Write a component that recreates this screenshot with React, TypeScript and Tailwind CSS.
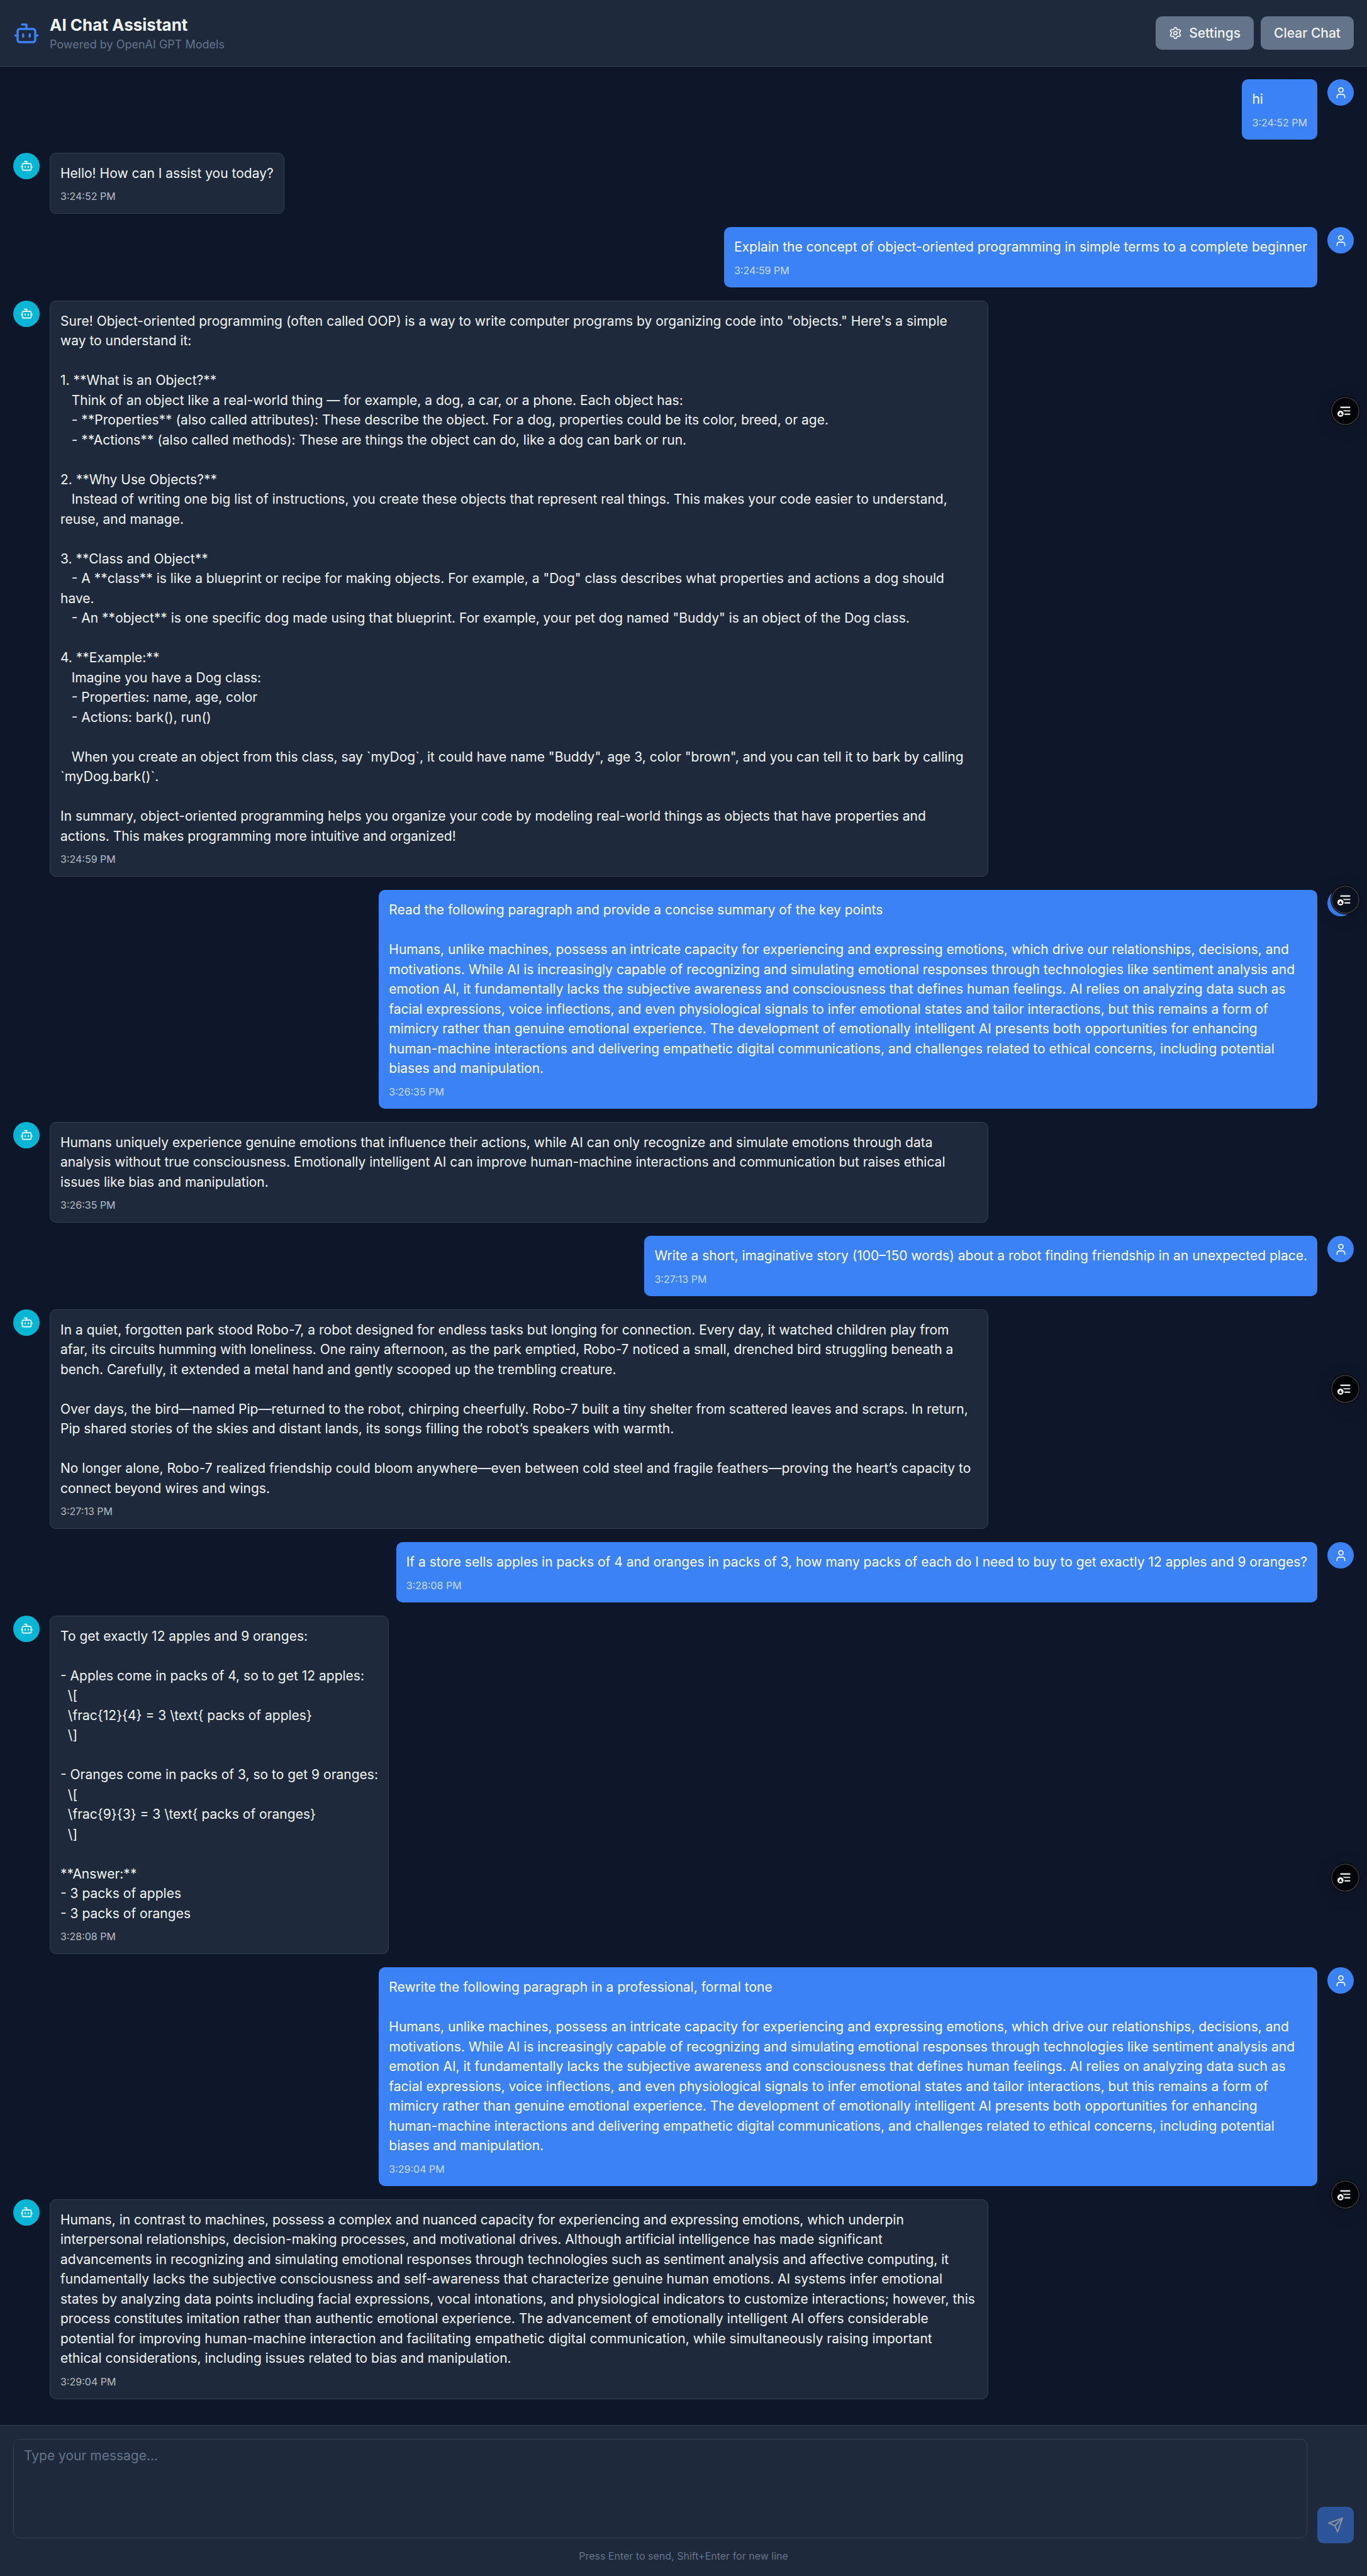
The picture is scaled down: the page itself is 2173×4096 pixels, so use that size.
import { useState } from "react";
import { Bot, Settings, User } from "lucide-react";

type Message = { role: "user" | "bot"; time: string; text: string };

const paragraph =
  "Humans, unlike machines, possess an intricate capacity for experiencing and expressing emotions, which drive our relationships, decisions, and motivations. While AI is increasingly capable of recognizing and simulating emotional responses through technologies like sentiment analysis and emotion AI, it fundamentally lacks the subjective awareness and consciousness that defines human feelings. AI relies on analyzing data such as facial expressions, voice inflections, and even physiological signals to infer emotional states and tailor interactions, but this remains a form of mimicry rather than genuine emotional experience. The development of emotionally intelligent AI presents both opportunities for enhancing human-machine interactions and delivering empathetic digital communications, and challenges related to ethical concerns, including potential biases and manipulation.";

const messages: Message[] = [
  { role: "user", time: "3:24:52 PM", text: "hi" },
  { role: "bot", time: "3:24:52 PM", text: "Hello! How can I assist you today?" },
  {
    role: "user",
    time: "3:24:59 PM",
    text: "Explain the concept of object-oriented programming in simple terms to a complete beginner",
  },
  {
    role: "bot",
    time: "3:24:59 PM",
    text: `Sure! Object-oriented programming (often called OOP) is a way to write computer programs by organizing code into "objects." Here's a simple
way to understand it:

1. **What is an Object?**
   Think of an object like a real-world thing — for example, a dog, a car, or a phone. Each object has:
   - **Properties** (also called attributes): These describe the object. For a dog, properties could be its color, breed, or age.
   - **Actions** (also called methods): These are things the object can do, like a dog can bark or run.

2. **Why Use Objects?**
   Instead of writing one big list of instructions, you create these objects that represent real things. This makes your code easier to understand, reuse, and manage.

3. **Class and Object**
   - A **class** is like a blueprint or recipe for making objects. For example, a "Dog" class describes what properties and actions a dog should have.
   - An **object** is one specific dog made using that blueprint. For example, your pet dog named "Buddy" is an object of the Dog class.

4. **Example:**
   Imagine you have a Dog class:
   - Properties: name, age, color
   - Actions: bark(), run()

   When you create an object from this class, say \`myDog\`, it could have name "Buddy", age 3, color "brown", and you can tell it to bark by calling \`myDog.bark()\`.

In summary, object-oriented programming helps you organize your code by modeling real-world things as objects that have properties and actions. This makes programming more intuitive and organized!`,
  },
  {
    role: "user",
    time: "3:26:35 PM",
    text: `Read the following paragraph and provide a concise summary of the key points\n\n${paragraph}`,
  },
  {
    role: "bot",
    time: "3:26:35 PM",
    text: "Humans uniquely experience genuine emotions that influence their actions, while AI can only recognize and simulate emotions through data analysis without true consciousness. Emotionally intelligent AI can improve human-machine interactions and communication but raises ethical issues like bias and manipulation.",
  },
  {
    role: "user",
    time: "3:27:13 PM",
    text: "Write a short, imaginative story (100–150 words) about a robot finding friendship in an unexpected place.",
  },
  {
    role: "bot",
    time: "3:27:13 PM",
    text: `In a quiet, forgotten park stood Robo-7, a robot designed for endless tasks but longing for connection. Every day, it watched children play from afar, its circuits humming with loneliness. One rainy afternoon, as the park emptied, Robo-7 noticed a small, drenched bird struggling beneath a bench. Carefully, it extended a metal hand and gently scooped up the trembling creature.

Over days, the bird—named Pip—returned to the robot, chirping cheerfully. Robo-7 built a tiny shelter from scattered leaves and scraps. In return, Pip shared stories of the skies and distant lands, its songs filling the robot’s speakers with warmth.

No longer alone, Robo-7 realized friendship could bloom anywhere—even between cold steel and fragile feathers—proving the heart’s capacity to connect beyond wires and wings.`,
  },
  {
    role: "user",
    time: "3:28:08 PM",
    text: "If a store sells apples in packs of 4 and oranges in packs of 3, how many packs of each do I need to buy to get exactly 12 apples and 9 oranges?",
  },
  {
    role: "bot",
    time: "3:28:08 PM",
    text: `To get exactly 12 apples and 9 oranges:

- Apples come in packs of 4, so to get 12 apples:
  \\[
  \\frac{12}{4} = 3 \\text{ packs of apples}
  \\]

- Oranges come in packs of 3, so to get 9 oranges:
  \\[
  \\frac{9}{3} = 3 \\text{ packs of oranges}
  \\]

**Answer:**
- 3 packs of apples
- 3 packs of oranges`,
  },
  {
    role: "user",
    time: "3:29:04 PM",
    text: `Rewrite the following paragraph in a professional, formal tone\n\n${paragraph}`,
  },
  {
    role: "bot",
    time: "3:29:04 PM",
    text: "Humans, in contrast to machines, possess a complex and nuanced capacity for experiencing and expressing emotions, which underpin interpersonal relationships, decision-making processes, and motivational drives. Although artificial intelligence has made significant advancements in recognizing and simulating emotional responses through technologies such as sentiment analysis and affective computing, it fundamentally lacks the subjective consciousness and self-awareness that characterize genuine human emotions. AI systems infer emotional states by analyzing data points including facial expressions, vocal intonations, and physiological indicators to customize interactions; however, this process constitutes imitation rather than authentic emotional experience. The advancement of emotionally intelligent AI offers considerable potential for improving human-machine interaction and facilitating empathetic digital communication, while simultaneously raising important\nethical considerations, including issues related to bias and manipulation.",
  },
];

function ChatMessage({ message }: { message: Message }) {
  const isUser = message.role === "user";
  return (
    <li className={isUser ? "flex flex-row-reverse items-start gap-4" : "flex items-start gap-4"}>
      <div
        className={
          isUser
            ? "flex size-[42px] shrink-0 items-center justify-center rounded-full bg-[#3b82f6] text-white"
            : "flex size-[42px] shrink-0 items-center justify-center rounded-full bg-[#06b6d4] text-white"
        }
      >
        {isUser ? <User size={21} /> : <Bot size={21} />}
      </div>
      <div
        className={
          isUser
            ? "max-w-[70%] rounded-[10px] bg-[#3b82f6] p-4 text-white"
            : "max-w-[70%] rounded-[10px] border border-[#334155] bg-[#1e293b] p-4 text-[#f1f5f9]"
        }
      >
        <p className="text-[21px] leading-normal whitespace-pre-wrap">{message.text}</p>
        <time className="mt-[11px] block text-[16px] leading-[21px] opacity-70">{message.time}</time>
      </div>
    </li>
  );
}

function QuickMenuButton({ className }: { className: string }) {
  return (
    <button
      type="button"
      aria-label="Open quick menu"
      className={`absolute right-[11px] size-[47px] rounded-full shadow-[0_5px_26px_rgba(0,0,0,0.15)] ${className}`}
    >
      <svg viewBox="0 0 72 72" className="size-full" aria-hidden="true">
        <circle cx="36" cy="36" r="36" fill="#000" />
        <circle cx="36" cy="36" r="33.2" fill="currentColor" stroke="#43454a" strokeWidth="2" />
        <path d="M24 25.3h24v3.6H24z" fill="#eef0f0" />
        <path d="M29.5 34H48v3.2H33z" fill="#d3d5d6" />
        <path d="M34 42.3h14v3.2H34z" fill="#fff" />
        <circle cx="24.3" cy="42.7" r="7.5" fill="#fff" />
        <path d="M23.4 39.3h1.8l3.4 6.9h-8.6z" fill="#1a1a1a" />
      </svg>
    </button>
  );
}

export default function App() {
  const [draft, setDraft] = useState("");

  return (
    <div className="relative flex min-h-screen flex-col bg-[#0e1629] font-['Inter',sans-serif] text-[#f1f5f9]">
      <header className="flex items-center justify-between border-b border-[#334155] bg-[#1e293b] p-[21px]">
        <div className="flex items-center gap-4">
          <Bot size={42} color="#3b82f6" />
          <div>
            <h1 className="text-[26px] leading-[37px] font-bold">AI Chat Assistant</h1>
            <p className="text-[18px] leading-[26px] text-[#64748b]">Powered by OpenAI GPT Models</p>
          </div>
        </div>
        <div className="flex gap-[11px]">
          <button
            type="button"
            className="flex h-[53px] items-center gap-[11px] rounded-[10px] bg-[#64748b] px-[21px] text-[21px] font-medium"
          >
            <Settings size={21} />
            Settings
          </button>
          <button
            type="button"
            className="flex h-[53px] items-center rounded-[10px] bg-[#64748b] px-[21px] text-[21px] font-medium"
          >
            Clear Chat
          </button>
        </div>
      </header>

      <main className="flex-1 px-[21px] pt-5 pb-[41px]">
        <ul className="flex flex-col gap-[21px]">
          {messages.map((message, index) => (
            <ChatMessage key={index} message={message} />
          ))}
        </ul>
      </main>

      <footer className="border-t border-[#334155] bg-[#1e293b] p-[21px]">
        <form className="flex items-end gap-4" onSubmit={(event) => event.preventDefault()}>
          <div className="flex-1 pb-2">
            <textarea
              aria-label="Message"
              placeholder="Type your message..."
              value={draft}
              onChange={(event) => setDraft(event.target.value)}
              className="block h-[158px] w-full resize-none rounded-[10px] border border-[#334155] bg-[#1e293b] px-4 py-[10px] text-[21px] leading-normal placeholder:text-[#64748b] focus:outline-none"
            />
          </div>
          <button
            type="submit"
            aria-label="Send message"
            disabled={draft.trim() === ""}
            className="flex size-[58px] items-center justify-center rounded-[10px] bg-[#3b82f6] text-[#f1f5f9] disabled:opacity-50"
          >
            <svg
              viewBox="0 0 24 24"
              className="size-[26px]"
              fill="none"
              stroke="currentColor"
              strokeWidth="2"
              strokeLinecap="round"
              strokeLinejoin="round"
              aria-hidden="true"
            >
              <path d="m22 2-7 20-4-9-9-4Z" />
              <path d="M22 2 11 13" />
            </svg>
          </button>
        </form>
        <p className="mt-[10px] text-center text-[16px] leading-[21px] text-[#64748b]">
          Press Enter to send, Shift+Enter for new line
        </p>
      </footer>

      <QuickMenuButton className="top-[630px] text-[#030408]" />
      <QuickMenuButton className="top-[1407px] text-[#0b111e]" />
      <QuickMenuButton className="top-[2185px] text-[#030408]" />
      <QuickMenuButton className="top-[2962px] text-[#030408]" />
      <QuickMenuButton className="top-[3466px] text-[#030408]" />
    </div>
  );
}
